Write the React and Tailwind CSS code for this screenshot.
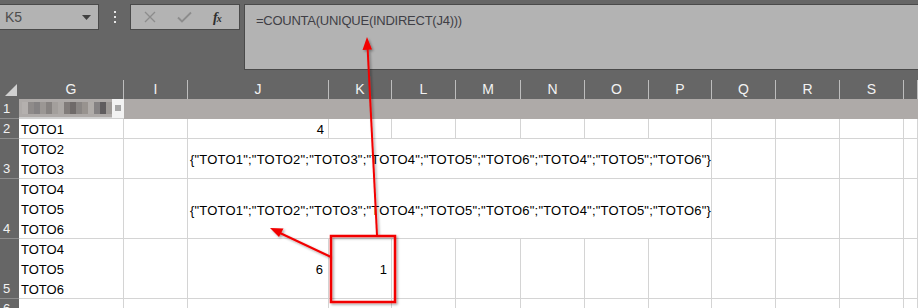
import React from 'react'

const cols = ['G', 'I', 'J', 'K', 'L', 'M', 'N', 'O', 'P', 'Q', 'R', 'S', '']
const arr = '{"TOTO1";"TOTO2";"TOTO3";"TOTO4";"TOTO5";"TOTO6";"TOTO4";"TOTO5";"TOTO6"}'

const RowHead = ({ n }) => (
  <div className="bg-[#666666] text-[#f2f2f2] border-b border-[#8c8c8c] flex items-end pl-[3px] leading-[20px]">
    <span className="translate-y-[1px]">{n}</span>
  </div>
)

const Cell = ({ children, className = '' }) => (
  <div className={`bg-white border-r border-b border-[#d4d4d4] text-black leading-[20px] px-[2px] overflow-visible whitespace-nowrap ${className}`}>
    {children}
  </div>
)

const Lines = ({ items }) => (
  <Cell className="flex flex-col justify-end">
    {items.map((t, i) => <span key={i} className="translate-y-[2px]">{t}</span>)}
  </Cell>
)

// blurred header text in G1
const Mosaic = () => {
  const blocks = ['#b4b0ae', '#8f8b8a', '#858283', '#9b9794', '#878381', '#a39f9c', '#aca8a5', '#817c7a', '#6f6a69', '#8a8684', '#98938f', '#b0aca9', '#858283', '#5f5c5e', '#9d9996']
  return (
    <div className="flex items-center h-[12px]">
      {blocks.map((c, i) => (
        <div key={i} className="w-[6px] h-[12px] blur-[0.7px]" style={{ background: c }} />
      ))}
    </div>
  )
}

const Overlay = () => (
  <svg className="absolute inset-0 pointer-events-none" width="918" height="308">
    <defs>
      <filter id="sh" x="-20%" y="-20%" width="140%" height="140%">
        <feDropShadow dx="1.5" dy="1.5" stdDeviation="1.2" floodColor="#000" floodOpacity="0.35" />
      </filter>
    </defs>
    <g filter="url(#sh)" stroke="#f20000" fill="#f20000">
      <rect x="331" y="236" width="64" height="66" fill="none" strokeWidth="2.5" />
      <line x1="377" y1="235" x2="367.6" y2="48" strokeWidth="2" />
      <polygon points="367,37 362.5,50 372,49.5" stroke="none" />
      <line x1="331" y1="257" x2="280" y2="233" strokeWidth="2" />
      <polygon points="270,228 283.5,228.5 279,237" stroke="none" />
    </g>
  </svg>
)

export default function App() {
  return (
    <div className="relative w-[918px] h-[308px] overflow-hidden bg-[#666666] text-[13px]" style={{ fontFamily: '"Liberation Sans", Arial, sans-serif' }}>
      {/* formula toolbar */}
      <div className="flex items-start h-[80px] pt-[4px]">
        <div className="w-[99px] h-[26px] bg-[#b3b3b3] border border-[#4a4a4a] border-l-0 flex items-center justify-between pl-[5px] pr-[7px] text-[#4d4d4d] text-[14px]">
          <span>K5</span>
          <svg width="9" height="5" viewBox="0 0 9 5"><polygon points="0,0 9,0 4.5,5" fill="#404040" /></svg>
        </div>
        <div className="w-[31px] h-[26px] flex flex-col items-center justify-center gap-[3px]">
          <div className="w-[2px] h-[2px] bg-[#e6e6e6]" />
          <div className="w-[2px] h-[2px] bg-[#e6e6e6]" />
          <div className="w-[2px] h-[2px] bg-[#e6e6e6]" />
        </div>
        <div className="w-[110px] h-[26px] bg-[#b3b3b3] border border-[#4a4a4a] flex items-center pl-[13px] gap-[21px]">
          <svg width="12" height="12" viewBox="0 0 12 12"><path d="M1 1 L11 11 M11 1 L1 11" stroke="#8c8c8c" strokeWidth="1.3" /></svg>
          <svg width="15" height="12" viewBox="0 0 15 12"><path d="M1 6.5 L5 10.5 L14 1.5" stroke="#8c8c8c" strokeWidth="1.8" fill="none" /></svg>
          <span className="italic text-[#2e2e2e] text-[14px] font-semibold tracking-[-1px]" style={{ fontFamily: '"Liberation Serif", serif' }}>
            f<span className="text-[10px]">x</span>
          </span>
        </div>
        <div className="w-[4px]" />
        <div className="flex-1 h-[66px] bg-[#b3b3b3] border border-[#4a4a4a] border-r-0 pl-[11px] pt-[6px] text-[#3f3f46] text-[13px] tracking-[-0.25px]">
          =COUNTA(UNIQUE(INDIRECT(J4)))
        </div>
      </div>

      {/* sheet grid */}
      <div className="grid grid-cols-[19px_105px_64px_141px_63px_64px_65px_64px_64px_63px_64px_64px_64px_1fr] grid-rows-[19px_20px_20px_40px_60px_60px_20px]">
        {/* column headers */}
        <div className="bg-[#666666] flex items-end justify-end pr-[2px] pb-[3px]">
          <svg width="12" height="12" viewBox="0 0 12 12"><polygon points="12,0 12,12 0,12" fill="#d0d0d0" /></svg>
        </div>
        {cols.map((c, i) => (
          <div key={i} className="bg-[#666666] border-r border-[#bdbdbd] text-[#f2f2f2] text-[14px] flex items-center justify-center">
            {c}
          </div>
        ))}

        {/* row 1 */}
        <RowHead n="1" />
        <div className="bg-[#aeaaa8] border-b-[2px] border-[#cfcfcf] flex items-center justify-between pl-[3px]">
          <Mosaic />
          <div className="w-[16px] h-[19px] bg-[#f2f2f2] flex items-center justify-center">
            <div className="w-[6px] h-[6px] bg-[#a6a6a6]" />
          </div>
        </div>
        <div className="col-span-12 bg-[#aeaaa8]" />

        {/* row 2 */}
        <RowHead n="2" />
        <Lines items={['TOTO1']} />
        <Cell />
        <Cell className="flex items-end justify-end pr-[4px]"><span className="translate-y-[2px]">4</span></Cell>
        {Array.from({ length: 10 }).map((_, i) => <Cell key={i} />)}

        {/* row 3 */}
        <RowHead n="3" />
        <Lines items={['TOTO2', 'TOTO3']} />
        <Cell />
        <Cell className="col-span-7 flex items-center pt-[3px] tracking-[0.2px]">{arr}</Cell>
        {Array.from({ length: 4 }).map((_, i) => <Cell key={i} />)}

        {/* row 4 */}
        <RowHead n="4" />
        <Lines items={['TOTO4', 'TOTO5', 'TOTO6']} />
        <Cell />
        <Cell className="col-span-7 flex items-center pt-[5px] tracking-[0.2px]">{arr}</Cell>
        {Array.from({ length: 4 }).map((_, i) => <Cell key={i} />)}

        {/* row 5 */}
        <RowHead n="5" />
        <Lines items={['TOTO4', 'TOTO5', 'TOTO6']} />
        <Cell />
        <Cell className="flex items-center justify-end pr-[5px] pt-[3px]">6</Cell>
        <Cell className="flex items-center justify-end pr-[4px] pt-[3px]">1</Cell>
        {Array.from({ length: 9 }).map((_, i) => <Cell key={i} />)}

        {/* row 6 */}
        <RowHead n="6" />
        {Array.from({ length: 13 }).map((_, i) => <Cell key={i} />)}
      </div>

      <Overlay />
    </div>
  )
}
